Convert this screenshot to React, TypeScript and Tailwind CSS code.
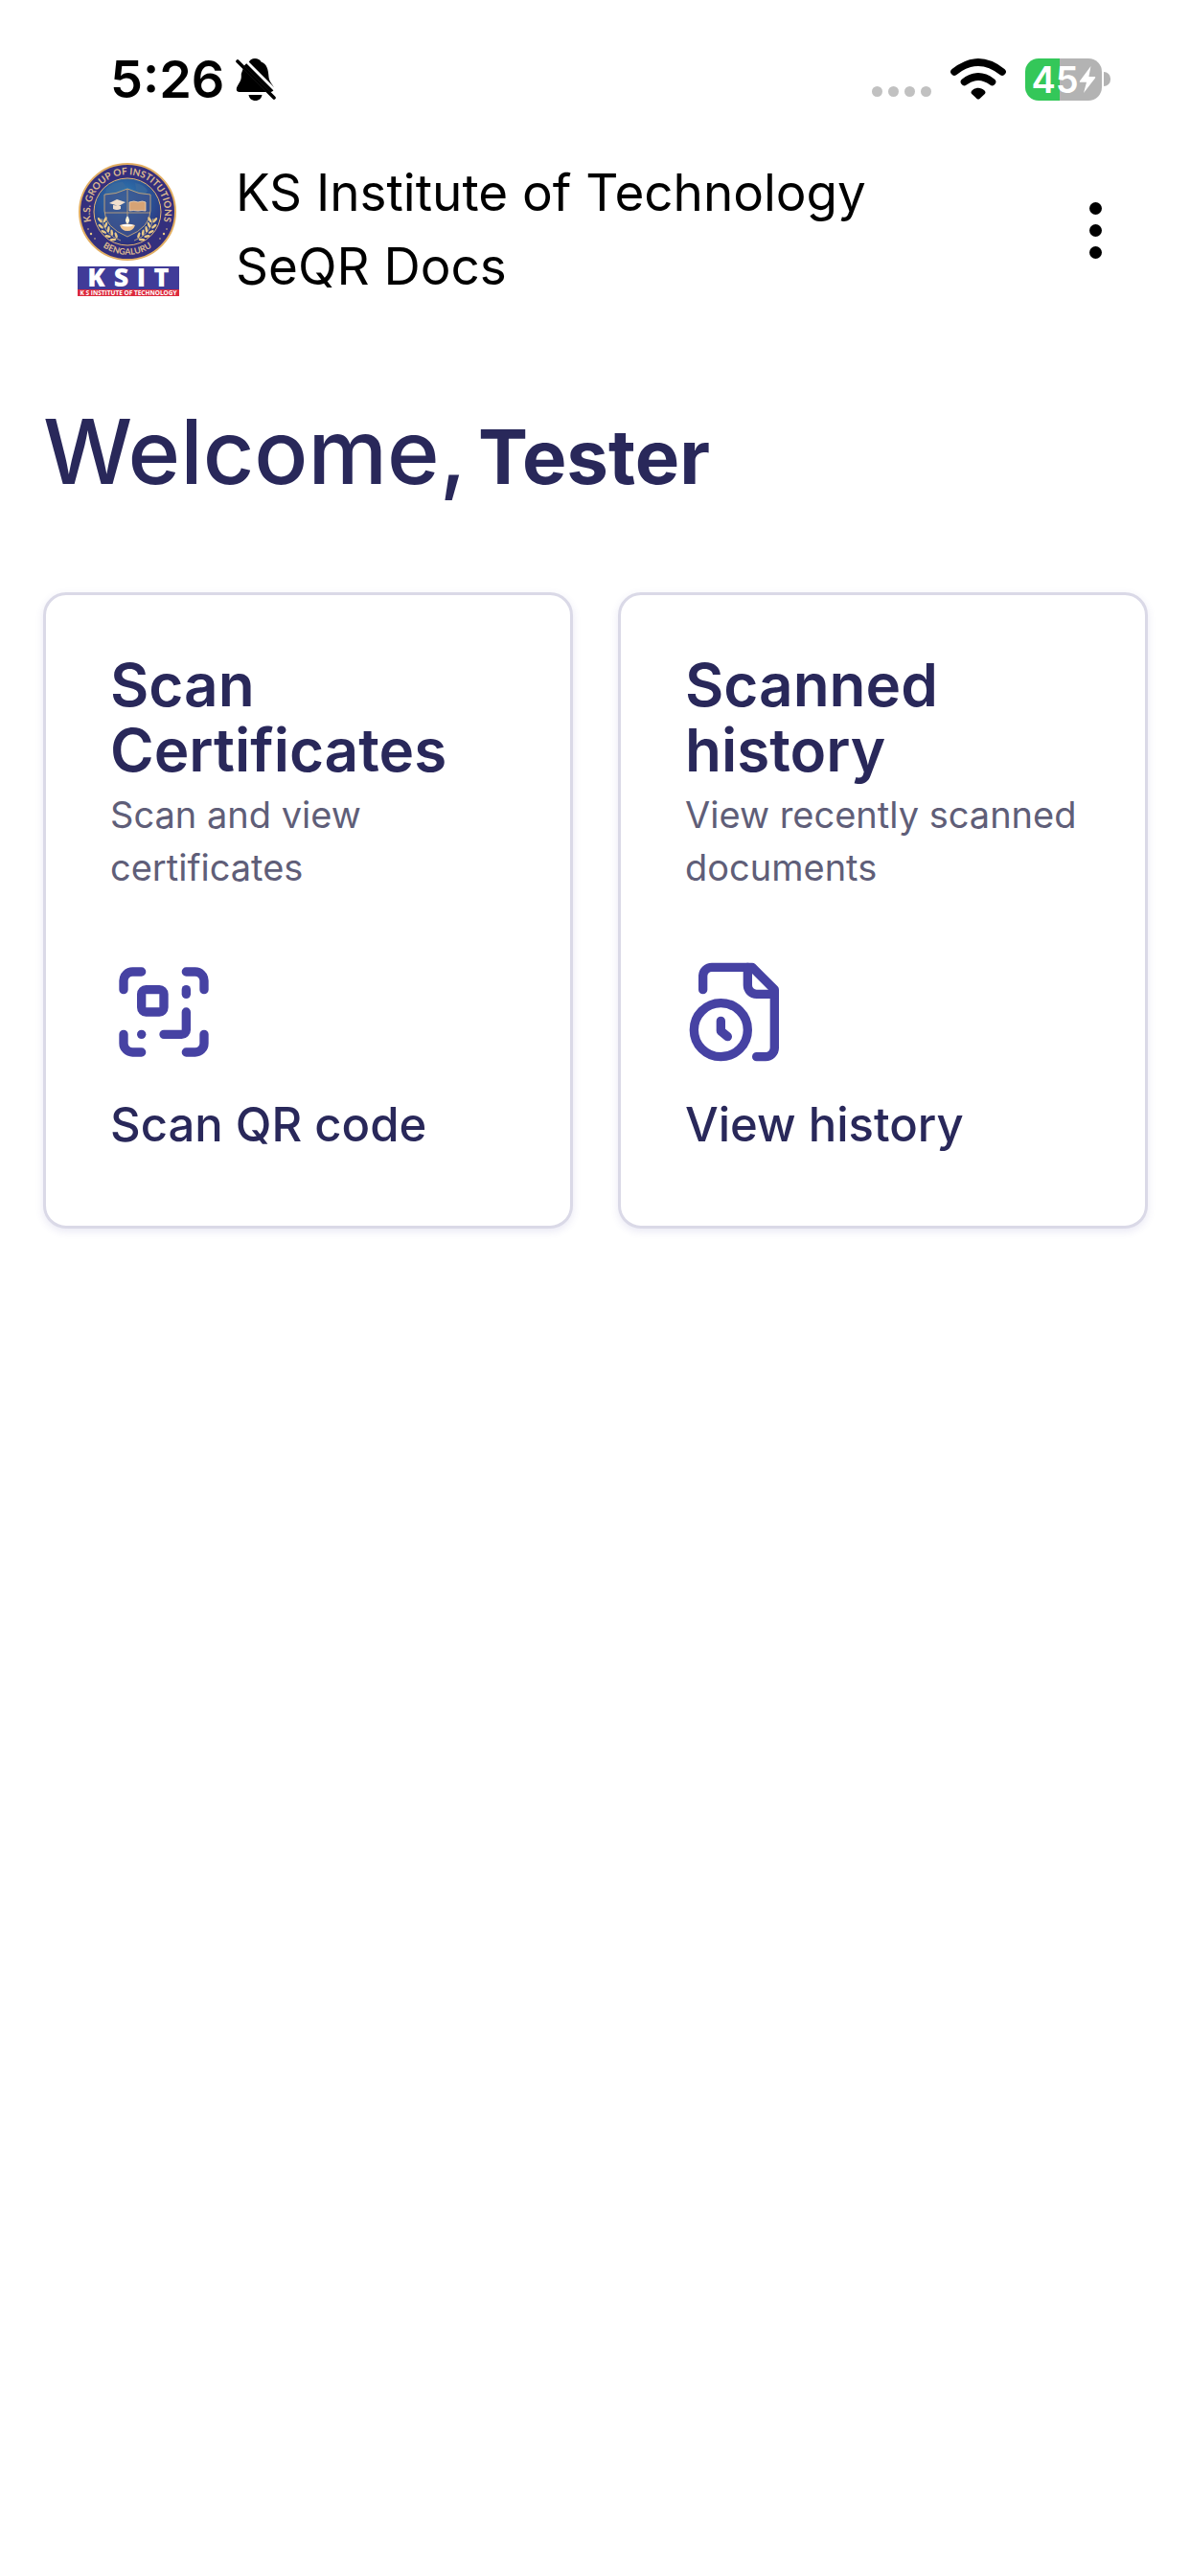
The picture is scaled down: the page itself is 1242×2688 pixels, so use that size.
import type { ReactNode } from 'react';
import { ScanQrCode } from 'lucide-react';

function BellOffIcon() {
  return (
    <svg viewBox="0 0 42 46" className="w-[42px] h-[46px]" aria-hidden="true">
      <path
        d="M20 1c-3 0-5 1.400-6 3.600-3.300 1.300-5.500 4-6.500 7.600L5.800 17v3.500C5.500 26 1 29 .8 33c-.1 2 1.200 3 3 3h32.400c1.800 0 4.200-1.500 3.800-4-.7-3.300-5-6.500-5.500-11.500C34 12 32.500 7 26.500 4.600 25.500 2.300 23 1 20 1Z"
        fill="black"
      />
      <path d="M13.500 39h14c-.6 3.800-3.200 6-7 6s-6.400-2.200-7-6Z" fill="black" />
      <path d="M-1 1 44 46M5-2 46 39" stroke="white" strokeWidth="3" />
      <path d="M-3-1h8L1 9Z" fill="white" />
      <path d="M2 4 40 42" stroke="black" strokeWidth="3.600" strokeLinecap="round" />
    </svg>
  );
}

function WifiIcon() {
  return (
    <svg viewBox="0 0 58 43" className="w-[58px] h-[43px]" aria-hidden="true">
      <path
        d="M4 14Q29-6 54 14M14.500 24.500Q29 13.500 43.500 24.500"
        fill="none"
        stroke="black"
        strokeWidth="7.600"
        strokeLinecap="round"
      />
      <path
        d="M22.500 33.500c4-3.600 9-3.600 13 0 1.300 1.200 1.300 2.400.3 3.400l-5.300 5c-1 .9-2 .9-3 0l-5.300-5c-1-1-1-2.200.3-3.400Z"
        fill="black"
      />
    </svg>
  );
}

function Battery() {
  return (
    <div className="flex items-center gap-0.5">
      <div className="flex items-center justify-center w-20 h-11 rounded-[14px] bg-[linear-gradient(to_right,#34c759_45%,#b3b3b3_45%)] text-white">
        <span className="text-[38px] leading-none font-semibold">45</span>
        <svg viewBox="0 0 18 28" className="w-[18px] h-7" aria-hidden="true">
          <path d="M12.500 0 1 15.500c-.5.800-.2 1.300.6 1.300H8L5 28 17 12.500c.6-.8.200-1.400-.6-1.400h-6Z" fill="white" />
        </svg>
      </div>
      <div className="w-[7px] h-[15px] rounded-r-full bg-[#b3b3b3]" />
    </div>
  );
}

function StatusBar() {
  return (
    <div className="flex items-center justify-between h-[163px] pt-0.5 pl-[115px] pr-[83px]">
      <div className="flex items-center gap-3">
        <span className="text-[54px] leading-none font-semibold text-black">5:26</span>
        <BellOffIcon />
      </div>

      <div className="flex items-center">
        <div className="flex gap-1.5 mt-[26px] mr-5">
          <span className="size-[11px] rounded-full bg-[#c1c1c1]" />
          <span className="size-[11px] rounded-full bg-[#c1c1c1]" />
          <span className="size-[11px] rounded-full bg-[#c1c1c1]" />
          <span className="size-[11px] rounded-full bg-[#c1c1c1]" />
        </div>
        <WifiIcon />
        <div className="ml-5">
          <Battery />
        </div>
      </div>
    </div>
  );
}

const LEAVES = [
  { x: 26, y: 60, r: -5 },
  { x: 27, y: 66, r: -15 },
  { x: 30, y: 71, r: -28 },
  { x: 34, y: 75, r: -42 },
  { x: 39, y: 78, r: -55 },
];

function Laurel() {
  return (
    <g fill="#e9c987">
      {LEAVES.map((leaf) => (
        <g key={leaf.y} transform={`translate(${leaf.x} ${leaf.y}) rotate(${leaf.r})`}>
          <ellipse cx="-2" cy="-2" rx="1.300" ry="3.200" transform="rotate(-35)" />
          <ellipse cx="2" cy="-2" rx="1.300" ry="3.200" transform="rotate(35)" />
        </g>
      ))}
      <path d="M25 58q3 17 20 23" fill="none" stroke="#e9c987" strokeWidth=".7" />
    </g>
  );
}

function Logo() {
  return (
    <svg viewBox="0 0 106 139" className="w-[106px] h-[139px] mb-0.5 shrink-0" role="img" aria-label="KSIT">
      <defs>
        <radialGradient id="globe" cx=".45" cy=".3" r=".7">
          <stop offset="0" stopColor="#2f7fb5" />
          <stop offset=".5" stopColor="#2a5799" />
          <stop offset="1" stopColor="#2c2f7c" />
        </radialGradient>
        <path id="ring-top" d="M14.800 63A39 39 0 1 1 89.200 63" />
        <path id="ring-bottom" d="M18 80A44.500 44.500 0 0 0 86 80" />
      </defs>

      <circle cx="52" cy="51" r="50" fill="#342f7d" stroke="#e2ae62" strokeWidth="2" />
      <circle cx="52" cy="51" r="35" fill="url(#globe)" stroke="#e2b574" strokeWidth="1" />
      <path d="M30 27q8-8 17-7l4 5-6 3-3 7-8-1-6 4ZM60 21q9 1 13 8l-3 5-8-2Z" fill="#3d6b9c" opacity=".7" />

      <g fill="#dcb98f" fontFamily="Lato, sans-serif" fontWeight="700" textAnchor="middle">
        <text fontSize="10">
          <textPath href="#ring-top" startOffset="50%">K.S. GROUP OF INSTITUTIONS</textPath>
        </text>
        <text fontSize="9">
          <textPath href="#ring-bottom" startOffset="50%">BENGALURU</textPath>
        </text>
      </g>

      <g fill="#e9c987">
        <circle cx="11" cy="69" r=".8" />
        <circle cx="14" cy="74" r="1.200" />
        <circle cx="18" cy="79" r=".8" />
        <circle cx="93" cy="69" r=".8" />
        <circle cx="90" cy="74" r="1.200" />
        <circle cx="86" cy="79" r=".8" />
      </g>

      <path
        d="M28 33q12 0 24-6 12 6 24 6v17q0 17-24 27Q28 67 28 50Z"
        fill="#40528b"
        fillOpacity=".7"
        stroke="#c9a878"
        strokeWidth=".9"
      />
      <path d="M52 27v28M28 52h48" stroke="#c9a878" strokeWidth=".8" />
      <path d="m33 42 8-4 9 3-7 4ZM37 44v4q4 2 8 0v-3" fill="#f1dfcd" />
      <path d="M54 41q5-2 9 0 5-2 8 0v9q-4-1-8 0-5-1-9 0Z" fill="#d6a375" stroke="#f0d3b4" strokeWidth=".8" />
      <path d="M52 55q4 5 0 9-4-4 0-9Z" fill="#fff3d8" />
      <path d="M44 65q8-3 16 0-2 6-8 6t-8-6Z" fill="#f4c894" />
      <path d="M45 65q7-2 14 0-7 3-14 0Z" fill="#fff" />

      <Laurel />
      <g transform="translate(104 0) scale(-1 1)">
        <Laurel />
      </g>

      <rect y="108" width="106" height="25" fill="#403b98" />
      <rect y="132" width="106" height="7" fill="#dc2a3d" />
      <text
        x="19.500 45.500 66.500 87.500"
        y="129"
        fill="white"
        fontSize="27"
        fontWeight="800"
        fontFamily="Open Sans, sans-serif"
        textAnchor="middle"
      >
        KSIT
      </text>
      <text
        x="53"
        y="138"
        fill="white"
        fontSize="6.500"
        fontWeight="700"
        fontFamily="Open Sans, sans-serif"
        textAnchor="middle"
      >
        K S INSTITUTE OF TECHNOLOGY
      </text>
    </svg>
  );
}

function Header() {
  return (
    <header className="flex items-center pl-[81px] pr-[67px]">
      <Logo />
      <div className="flex-1 ml-[59px] text-[53px] leading-[77px] text-black">
        <p>KS Institute of Technology</p>
        <p>SeQR Docs</p>
      </div>
      <button type="button" aria-label="Menu" className="flex flex-col items-center gap-2.5 w-16 py-4">
        <span className="size-[13px] rounded-full bg-black" />
        <span className="size-[13px] rounded-full bg-black" />
        <span className="size-[13px] rounded-full bg-black" />
      </button>
    </header>
  );
}

function FileClockIcon() {
  return (
    <svg
      viewBox="0 0 24 24"
      className="size-28"
      fill="none"
      stroke="currentColor"
      strokeWidth="2"
      strokeLinecap="round"
      strokeLinejoin="round"
      aria-hidden="true"
    >
      <path d="M16 22h2a2 2 0 0 0 2-2V7l-5-5H6a2 2 0 0 0-2 2v3" />
      <path d="M14 2v4a2 2 0 0 0 2 2h4" />
      <circle cx="8" cy="16" r="6" />
      <path d="M9.500 17.500 8 16.250V14" />
    </svg>
  );
}

type ActionCardProps = {
  title: string;
  description: string;
  action: string;
  icon: ReactNode;
};

function ActionCard({ title, description, action, icon }: ActionCardProps) {
  return (
    <button
      type="button"
      className="flex flex-col items-start text-left pt-[60px] pb-[73px] pl-[67px] pr-10 border-3 border-[#dad9e7] rounded-[24px] bg-white shadow-[0_3px_9px_rgba(70,66,165,0.12)]"
    >
      <span className="text-[62px] leading-[68px] font-semibold text-[#29285a]">{title}</span>
      <span className="mt-1.5 text-[38px] leading-[55px] text-[#5f5e78]">{description}</span>
      <span className="mt-[67px] text-[#4642a3]">{icon}</span>
      <span className="mt-[30px] text-[49px] leading-[64px] font-medium text-[#29285a]">{action}</span>
    </button>
  );
}

export default function App() {
  return (
    <div className="min-h-screen bg-white font-[Inter,sans-serif]">
      <StatusBar />
      <Header />

      <main className="pl-[45px] pr-11">
        <h1 className="flex flex-wrap items-baseline gap-x-3 mt-[94px] text-[93px] leading-[120px] font-medium text-[#29285a]">
          <span>Welcome,</span>
          <strong className="text-[78px] leading-none font-bold">Tester</strong>
        </h1>

        <div className="grid grid-cols-2 gap-[47px] mt-[87px]">
          <ActionCard
            title="Scan Certificates"
            description="Scan and view certificates"
            action="Scan QR code"
            icon={<ScanQrCode className="size-28" />}
          />
          <ActionCard
            title="Scanned history"
            description="View recently scanned documents"
            action="View history"
            icon={<FileClockIcon />}
          />
        </div>
      </main>
    </div>
  );
}
